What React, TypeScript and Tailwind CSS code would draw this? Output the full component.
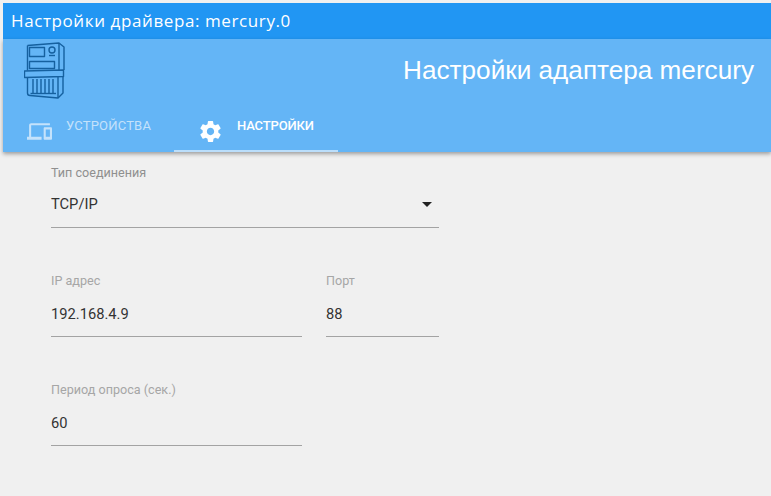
function MeterIcon() {
  return (
    <svg width="42" height="58" viewBox="0 0 42 58" fill="none" stroke="#15609f" strokeWidth="1.4" strokeLinejoin="round" className="shrink-0">
      <path d="M3.5 3.5 L35 1 L40 5 L40 28 M3.5 3.5 L3.5 28.5" />
      <path d="M35 1 L35 28" />
      <rect x="5.5" y="5.5" width="15" height="9" />
      <circle cx="28" cy="8" r="3" />
      <path d="M25 13.5 H31" />
      <rect x="5.5" y="19.5" width="25" height="7" />
      <path d="M0.5 29 L39.5 28 L39.5 34.5 L0.5 35.5 Z" />
      <path d="M3.5 35.5 L3.5 51 Q3.5 53.5 6 53.5 L34 56 L39 51 L39 34.5" />
      <path d="M34 35 V56" />
      <path d="M9 37 V51 M13 37 V51 M17 37 V51 M21 37 V51 M25 37 V51 M29 37 V51" />
      <path d="M6.5 51.5 H32" />
    </svg>
  );
}

function DevicesIcon() {
  return (
    <svg width="25" height="25" viewBox="0 0 24 24" fill="currentColor" className="mt-px shrink-0">
      <path d="M4 6h18V4H4c-1.1 0-2 .9-2 2v11H0v3h14v-3H4V6zm19 2h-6c-.55 0-1 .45-1 1v10c0 .55.45 1 1 1h6c.55 0 1-.45 1-1V9c0-.55-.45-1-1-1zm-1 9h-4v-7h4v7z" />
    </svg>
  );
}

function GearIcon() {
  return (
    <svg width="25" height="25" viewBox="0 0 24 24" fill="currentColor" className="mt-px shrink-0">
      <path d="M19.43 12.98c.04-.32.07-.64.07-.98s-.03-.66-.07-.98l2.11-1.65c.19-.15.24-.42.12-.64l-2-3.46c-.12-.22-.39-.3-.61-.22l-2.49 1c-.52-.4-1.08-.73-1.69-.98l-.38-2.65C14.46 2.18 14.25 2 14 2h-4c-.25 0-.46.18-.49.42l-.38 2.65c-.61.25-1.17.59-1.69.98l-2.49-1c-.23-.09-.49 0-.61.22l-2 3.46c-.13.22-.07.49.12.64l2.11 1.65c-.04.32-.07.65-.07.98s.03.66.07.98l-2.11 1.65c-.19.15-.24.42-.12.64l2 3.46c.12.22.39.3.61.22l2.49-1c.52.4 1.08.73 1.69.98l.38 2.65c.03.24.24.42.49.42h4c.25 0 .46-.18.49-.42l.38-2.65c.61-.25 1.17-.59 1.69-.98l2.49 1c.23.09.49 0 .61-.22l2-3.46c.12-.22.07-.49-.12-.64l-2.11-1.65zM12 15.5c-1.93 0-3.5-1.57-3.5-3.5s1.57-3.5 3.5-3.5 3.5 1.57 3.5 3.5-1.57 3.5-3.5 3.5z" />
    </svg>
  );
}

function Field({ label, value, className }: { label: string; value: string; className: string }) {
  return (
    <div className={`flex flex-col ${className}`}>
      <span className="text-[12.6px] leading-[14px] text-[#a6a6a6]">{label}</span>
      <div className="h-[41px] flex items-center pb-[4px] border-b border-[#a3a3a3] mt-[8px] text-[14.7px] text-[#333]">
        {value}
      </div>
    </div>
  );
}

export default function App() {
  return (
    <div className="w-[771px] h-[496px] overflow-hidden pt-[3px] pl-[3px] bg-[#f0f0f0] font-['Roboto',sans-serif]">
      <div className="h-[36px] flex items-center pl-[8px] bg-[#2196f3] text-white text-[17px] tracking-[0.6px] font-['Open_Sans',sans-serif]">
        Настройки драйвера: mercury.0
      </div>
      <div className="h-[113px] bg-[#64b5f6] shadow-[0_2px_4px_rgba(0,0,0,0.35)] flex flex-col relative">
        <div className="h-[65px] flex justify-between pl-[21px] pr-[17px]">
          <div className="pt-[3px]"><MeterIcon /></div>
          <div className="text-white text-[26.15px] leading-[28px] pt-[17px] font-['Liberation_Sans',sans-serif]">
            Настройки адаптера mercury
          </div>
        </div>
        <div className="flex flex-1">
          <div className="w-[171px] flex items-start pl-[24px] pt-[14px] gap-[14px] text-[#c4e2fb] text-[13px]">
            <DevicesIcon />
            <span className="leading-[16px] tracking-[0.2px]">УСТРОЙСТВА</span>
          </div>
          <div className="w-[164px] flex items-start pl-[24px] pt-[14px] gap-[14px] text-white text-[13px] font-medium border-b-2 border-[#bbdefb]">
            <GearIcon />
            <span className="leading-[16px] -tracking-[0.15px]">НАСТРОЙКИ</span>
          </div>
        </div>
      </div>
      <div className="ml-[48px] pt-[14px] flex flex-col w-[388px]">
        <div className="flex flex-col">
          <span className="text-[12.6px] leading-[14px] text-[#8f8f8f]">Тип соединения</span>
          <div className="h-[39px] flex items-center justify-between pb-[8px] border-b border-[#a3a3a3] mt-[9px] text-[14.7px] text-[#333]">
            TCP/IP
            <span className="w-0 h-0 mr-[7px] border-x-[5px] border-x-transparent border-t-[5px] border-t-[#222]" />
          </div>
        </div>
        <div className="flex gap-[24px] mt-[46px]">
          <Field label="IP адрес" value="192.168.4.9" className="w-[251px]" />
          <Field label="Порт" value="88" className="w-[113px]" />
        </div>
        <Field label="Период опроса (сек.)" value="60" className="w-[251px] mt-[46px]" />
      </div>
    </div>
  );
}
